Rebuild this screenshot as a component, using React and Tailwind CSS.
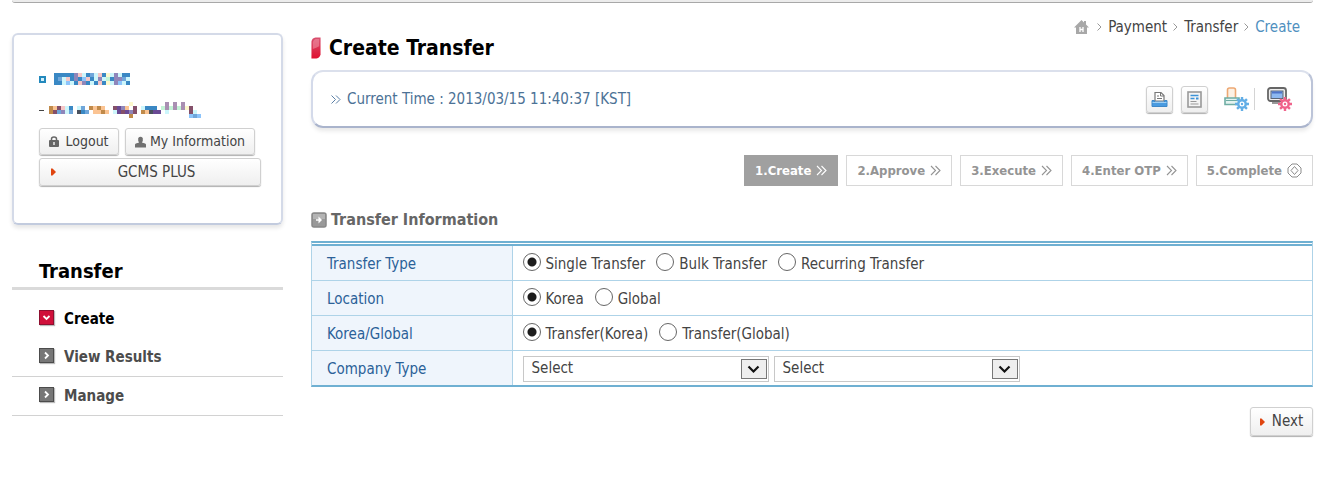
const PALETTE = {
  B: "#3a88c4", S: "#6fa6da", L: "#8cc4fb", c: "#cdf6fb", P: "#8f86ba", K: "#f6c6c6",
  y: "#fdf8cc", g: "#c4f3d6", O: "#c08a4a", o: "#fbc493", M: "#84506a", V: "#6a4a94",
  D: "#4a525e", p: "#a98fb2",
};

const NAME_MOSAIC = [
  "BBBBBPKcBScKBycPcBB",
  "BScKBPBLKBcPcgBPPSc",
  "BBcLcBKPBcBKBycPLcB",
];

const DETAIL_MOSAIC = [
  "....................y........p.p.p....",
  "OoMKcB.cS.OoOo..MVPo.M.cBBB.gpgpgpyM..",
  "OMSPcS.DBS.ooOo.cVMVPM.OoDVV.c.....Mc.",
  "....................O..............LSL",
];

function Mosaic({ rows, label }) {
  const w = rows[0].length * 4;
  const h = rows.length * 4;
  return (
    <svg role="img" aria-label={label} width={w} height={h} viewBox={`0 0 ${w} ${h}`} shapeRendering="crispEdges">
      {rows.flatMap((row, y) =>
        [...row].map((k, x) =>
          k === "." ? null : <rect key={`${x}-${y}`} x={x * 4} y={y * 4} width="4" height="4" fill={PALETTE[k]} />
        )
      )}
    </svg>
  );
}

function Chevrons() {
  return (
    <svg width="11" height="11" viewBox="0 0 11 11" fill="none" stroke="currentColor" strokeWidth="1.1" aria-hidden="true">
      <path d="M1 1l4.500 4.500L1 10M5.500 1L10 5.500 5.500 10" />
    </svg>
  );
}

function Crumb() {
  return (
    <svg width="5" height="8" viewBox="0 0 5 8" fill="none" stroke="#999" aria-hidden="true">
      <path d="M.5.5L4 4 .5 7.500" />
    </svg>
  );
}

function Target() {
  return (
    <svg width="15" height="15" viewBox="0 0 15 15" fill="none" stroke="#8c8c8c" aria-hidden="true">
      <path d="M5 1h5l4 4v5l-4 4H5l-4-4V5z" />
      <path d="M7.500 3.500l3.500 4-3.500 4-3.500-4z" />
    </svg>
  );
}

function RedArrow() {
  return (
    <svg width="5" height="8" viewBox="0 0 5 8" aria-hidden="true">
      <path d="M0 0.500h1.500L5 4 1.500 7.500H0z" fill="#e04510" />
    </svg>
  );
}

function Gear({ x, y, color }) {
  const spokes = [0, 45, 90, 135];
  return (
    <g transform={`translate(${x} ${y})`} stroke={color} fill="none">
      {spokes.map((a) => (
        <path key={a} d="M0 -7V-4M0 4V7" strokeWidth="2.400" transform={`rotate(${a})`} />
      ))}
      <circle r="3.700" strokeWidth="2.400" fill="#fff" />
      <circle r="1.200" fill={color} stroke="none" />
    </g>
  );
}

function PrintIcon() {
  return (
    <svg width="17" height="17" viewBox="0 0 17 17" aria-hidden="true">
      <path d="M4 10V1.500h6l3 3v5.500z" fill="#fff" stroke="#777" strokeWidth="1.200" />
      <path d="M9.500 1.500V5H13M6 5h2M6 7.500h5" fill="none" stroke="#777" />
      <path d="M1 9.500h2.500v1.500h10V9.500H16V15.500H1z" fill="#4a9be0" stroke="#3f88c8" />
      <path d="M1.500 11.500h14" stroke="#9fd0f5" />
    </svg>
  );
}

function DocIcon() {
  return (
    <svg width="15" height="17" viewBox="0 0 15 17" aria-hidden="true">
      <rect x="1" y="1" width="13" height="15" fill="#f4f4f4" stroke="#999" strokeWidth="1.600" />
      <path d="M3.500 4.500h8M3.500 7.500h4" stroke="#3c93d8" strokeWidth="1.600" />
      <path d="M9 6.500h2.500v2H9z" fill="#3c93d8" />
      <path d="M3.500 10.500h6M3.500 13h8" stroke="#999" />
    </svg>
  );
}

function PrinterSettingsIcon() {
  return (
    <svg width="26" height="25" viewBox="0 0 26 25" aria-hidden="true">
      <path d="M3.500 12V3q0-2 2-2h4q2 0 2 2v9z" fill="#fdf1e4" stroke="#eda873" strokeWidth="1.600" />
      <path d="M1 11h14v6.500H1z" fill="#e4f3f0" stroke="#6fada4" strokeWidth="1.600" />
      <path d="M2 13.500h12" stroke="#6fada4" />
      <Gear x={18} y={17} color="#62aee6" />
    </svg>
  );
}

function ScreenSettingsIcon() {
  return (
    <svg width="26" height="25" viewBox="0 0 26 25" aria-hidden="true">
      <rect x="1" y="1" width="18" height="13" rx="2.500" fill="#eee" stroke="#666" strokeWidth="1.800" />
      <rect x="4" y="4" width="12" height="7.500" fill="#8db8f0" stroke="#5a6576" />
      <path d="M5 5.500h10" stroke="#4f74c8" strokeWidth="2" />
      <path d="M5 16h8" stroke="#777" strokeWidth="1.500" />
      <Gear x={18} y={17} color="#f0648c" />
    </svg>
  );
}

function MenuMark({ open }) {
  return (
    <svg
      className={`mb-[3px] shadow-[1px_1px_1px_#bbb] ${open ? "bg-[#d0103a]" : "bg-[#777]"}`}
      width="15" height="15" viewBox="0 0 15 15" fill="none" aria-hidden="true"
    >
      <rect x="0.500" y="0.500" width="14" height="14" stroke={open ? "#8e1030" : "#4c4c4c"} />
      <path d={open ? "M4.500 6l3 3 3-3" : "M6 4.500l3 3-3 3"} stroke="#fff" strokeWidth="1.800" />
    </svg>
  );
}

const BUTTON = "flex items-center rounded-[3px] border border-[#d0d0d0] bg-gradient-to-b from-white to-[#efefef] text-[#444] shadow-[0_1px_1px_#b0b0b0]";

function Sidebar() {
  const menu = [
    { label: "Create", open: true },
    { label: "View Results" },
    { label: "Manage" },
  ];
  return (
    <aside className="w-[271px] shrink-0 pt-[30px]">
      <section className="flex h-[192px] flex-col rounded-md border-2 border-[#d4dae8] border-b-[#c2cbde] px-[25px] pt-[38px] shadow-[0_3px_4px_#e6e6e6]">
        <div className="flex items-center gap-2">
          <span className="size-[7px] border-2 border-[#2389bd] bg-[#d4f0fa]" />
          <Mosaic rows={NAME_MOSAIC} label="Account name" />
        </div>
        <div className="mt-[17px] flex items-center gap-[5px] leading-4">
          <span className="h-px w-[5px] bg-[#444]" />
          <Mosaic rows={DETAIL_MOSAIC} label="Account details" />
        </div>
        <div className="mt-[10px] flex gap-[6px] text-[14px]">
          <button className={`${BUTTON} h-[27px] w-[80px] justify-center gap-[6px]`}>
            <svg width="10" height="11" viewBox="0 0 10 11" aria-hidden="true">
              <path d="M2.500 5V3q0-2 2.500-2t2.500 2v2" fill="none" stroke="#666" strokeWidth="1.500" />
              <rect y="4" width="10" height="7" rx="1" fill="#666" />
              <path d="M5 6v3" stroke="#eee" strokeWidth="1.500" />
            </svg>
            Logout
          </button>
          <button className={`${BUTTON} h-[27px] w-[130px] justify-center gap-1 whitespace-nowrap`}>
            <svg width="11" height="12" viewBox="0 0 12 12" fill="#707070" aria-hidden="true">
              <path d="M3.500 1.500Q6-1 8.500 1.500V5L7.500 6.500 11 7.500q1 .5 1 1.500v3H0V9q0-1 1-1.500l3.500-1L3.500 5z" />
            </svg>
            My Information
          </button>
        </div>
        <button className={`${BUTTON} mt-[3px] h-[28px] w-[222px] shrink-0 pl-[11px]`}>
          <RedArrow />
          <span className="flex-1 pr-[3px] text-center">GCMS PLUS</span>
        </button>
      </section>
      <nav>
        <h2 className="mt-[32px] border-b-3 border-[#dadada] pb-[2px] pl-[27px] text-[20px] leading-7 font-bold text-black">Transfer</h2>
        <ul className="pt-[10px] font-bold">
          {menu.map(({ label, open }) => (
            <li key={label} className={open ? "h-[38px]" : "h-[39px] border-b border-[#d2d2d2]"}>
              <a href="#" className={`flex h-full items-center gap-[10px] pl-[27px] ${open ? "text-black" : "text-[#4c4c4c]"}`}>
                <MenuMark open={open} />
                {label}
              </a>
            </li>
          ))}
        </ul>
      </nav>
    </aside>
  );
}

function Radios({ name, options }) {
  return (
    <div className="flex gap-[11px]">
      {options.map((o, i) => (
        <label key={o} className="flex items-center gap-[5px]">
          <input
            type="radio"
            name={name}
            defaultChecked={i === 0}
            className="mb-1 size-[18px] appearance-none rounded-full border border-[#666] bg-white checked:bg-[radial-gradient(circle,#1c1c1c_4px,#fff_5px)]"
          />
          {o}
        </label>
      ))}
    </div>
  );
}

function Select({ label }) {
  return (
    <span className="relative w-[246px]">
      <select aria-label={label} className="block h-[26px] w-full appearance-none border border-[#c8c8c8] bg-white pb-[2px] pl-2 text-[#444]">
        <option>Select</option>
      </select>
      <span className="pointer-events-none absolute top-[3px] right-[2px] flex h-5 w-[26px] items-center justify-center border border-[#777] bg-[#eee]">
        <svg width="13" height="9" viewBox="0 0 13 9" fill="none" stroke="#111" strokeWidth="2.200" aria-hidden="true">
          <path d="M1.500 1.500l5 5 5-5" />
        </svg>
      </span>
    </span>
  );
}

function Row({ label, last, children }) {
  return (
    <tr className={last ? "h-[35px]" : "h-[35px] border-b border-[#aed3e8]"}>
      <th scope="row" className="w-[200px] border-r border-[#aed3e8] bg-[#eff5fc] pt-[3px] pl-[15px] text-left font-normal text-[#2b6198]">{label}</th>
      <td className="pt-[3px] pl-[10px]">{children}</td>
    </tr>
  );
}

export default function App() {
  const steps = ["1.Create", "2.Approve", "3.Execute", "4.Enter OTP", "5.Complete"];
  return (
    <div className="bg-white pr-[15px] pb-8 pl-3 font-['DejaVu_Sans_Condensed','DejaVu_Sans',sans-serif] text-[15px] text-[#444]">
      <header className="h-[3px] rounded-b-sm border-b border-[#a8a8a8] bg-[#ececec]" />
      <div className="flex gap-7">
        <Sidebar />
        <main className="min-w-0 flex-1">
          <nav aria-label="Breadcrumb" className="flex items-center justify-end gap-[6px] pt-[14px] pr-[13px] leading-5">
            <a href="#" aria-label="Home" className="mr-[2px]">
              <svg width="15" height="14" viewBox="0 0 15 14" aria-hidden="true">
                <path d="M7.500 0L10 2.500V1h2v3.500L15 7.500H13V14H2V7.500H0z" fill="#a8a8a8" />
                <path d="M6 7v5M9 7v5M6 9.500h3" stroke="#fff" strokeWidth="1.300" />
              </svg>
            </a>
            <Crumb />
            <a href="#">Payment</a>
            <Crumb />
            <a href="#">Transfer</a>
            <Crumb />
            <a href="#" className="text-[#4f90c0]">Create</a>
          </nav>
          <h1 className="-mt-[3px] flex items-center gap-2 text-[21px] leading-7 font-bold text-black">
            <svg width="10" height="24" viewBox="0 0 11 24" aria-hidden="true">
              <defs>
                <linearGradient id="red" x1="0" y1="0" x2="0" y2="1">
                  <stop offset="0" stopColor="#d8506f" />
                  <stop offset="1" stopColor="#e01030" />
                </linearGradient>
              </defs>
              <path d="M0.500 23.500V5Q1 1 5 .5H10.500V19Q10 23 6 23.500z" fill="url(#red)" />
              <path d="M2 13V5.500Q3 2.500 5 2H9v8Q6 12 2 13z" fill="#f3a0b0" opacity=".5" />
            </svg>
            Create Transfer
          </h1>
          <section className="mt-2 flex h-[58px] items-center rounded-xl border-2 border-t-[#dbe0ec] border-r-[#bcc4d8] border-b-[#aab4cc] border-l-[#d4daea] pr-[18px] pl-[18px] shadow-[0_4px_4px_-1px_#e8e8e8]">
            <p className="flex flex-1 items-center gap-[6px] text-[#4c7296]">
              <svg width="10" height="9" viewBox="0 0 10 9" fill="none" stroke="#5a7fa5" aria-hidden="true">
                <path d="M.5.5l4 4-4 4M5 .5l4 4-4 4" />
              </svg>
              Current Time : 2013/03/15 11:40:37 [KST]
            </p>
            <div className="flex items-center">
              <button aria-label="Print" className={`${BUTTON} size-[27px] justify-center`}><PrintIcon /></button>
              <button aria-label="Document" className={`${BUTTON} ml-2 size-[27px] justify-center`}><DocIcon /></button>
              <button aria-label="Printer settings" className="ml-4"><PrinterSettingsIcon /></button>
              <span className="mr-3 ml-1 h-[22px] w-px bg-[#d4d4d4]" />
              <button aria-label="Screen settings"><ScreenSettingsIcon /></button>
            </div>
          </section>
          <ol className="mt-[27px] flex justify-end gap-2 text-[13px] font-bold">
            {steps.map((s, i) => (
              <li
                key={s}
                className={`flex h-[31px] items-center gap-[5px] border px-[10px] ${i === 0 ? "border-[#a0a0a0] bg-[#a0a0a0] text-white" : "border-[#d8d8d8] text-[#949494]"}`}
              >
                {s}
                {i < 4 ? <Chevrons /> : <Target />}
              </li>
            ))}
          </ol>
          <h2 className="mt-[22px] flex items-center gap-1 text-[16px] leading-6 font-bold text-[#666]">
            <svg width="16" height="16" viewBox="0 0 16 16" aria-hidden="true">
              <rect x="1" y="1" width="14" height="14" rx="2" fill="#999" stroke="#888" strokeWidth="1.500" />
              <path d="M2 2h12v5H2z" fill="#b4b4b4" />
              <path d="M5 8h4" stroke="#fff" strokeWidth="1.500" />
              <path d="M7.500 4.500L11 8l-3.500 3.500z" fill="#fff" />
            </svg>
            Transfer Information
          </h2>
          <div className="mt-[9px] border border-t-2 border-b-2 border-[#aed3e8] border-t-[#6fb0d2] border-b-[#6fb0d2] pt-px">
            <table className="w-full border-collapse border-t-2 border-[#6fb0d2]">
              <tbody>
                <Row label="Transfer Type"><Radios name="type" options={["Single Transfer", "Bulk Transfer", "Recurring Transfer"]} /></Row>
                <Row label="Location"><Radios name="location" options={["Korea", "Global"]} /></Row>
                <Row label="Korea/Global"><Radios name="scope" options={["Transfer(Korea)", "Transfer(Global)"]} /></Row>
                <Row label="Company Type" last>
                  <div className="flex gap-[5px]">
                    <Select label="Company type" />
                    <Select label="Company subtype" />
                  </div>
                </Row>
              </tbody>
            </table>
          </div>
          <div className="mt-5 flex justify-end">
            <button className={`${BUTTON} h-[29px] w-[63px] justify-center gap-[7px]`}>
              <RedArrow />
              Next
            </button>
          </div>
        </main>
      </div>
    </div>
  );
}
